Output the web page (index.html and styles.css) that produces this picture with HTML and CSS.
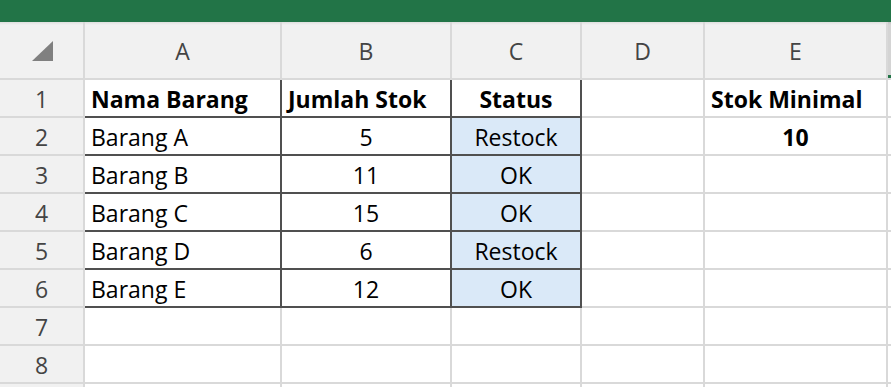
FILE: index.html
```
<!DOCTYPE html>
<html>
  <head>
    <meta charset="utf-8">
    <title> Stok Barang </title>
    <link rel="stylesheet" href="styles.css">
  </head>
  <body>
    <div class="ribbon"></div>

    <div class="sheet">
      <!-- column headers -->
      <div class="corner">
        <svg width="21" height="20" viewBox="0 0 21 20"><polygon points="0,20 21,20 21,0" fill="#808080"/></svg>
      </div>
      <div class="colhead">A</div>
      <div class="colhead">B</div>
      <div class="colhead">C</div>
      <div class="colhead">D</div>
      <div class="colhead">E</div>
      <div class="colhead active"></div>

      <!-- row 1 -->
      <div class="rowhead">1</div>
      <div class="cell box bold">Nama Barang</div>
      <div class="cell box bold">Jumlah Stok</div>
      <div class="cell box bold mid">Status</div>
      <div class="cell"></div>
      <div class="cell bold">Stok Minimal</div>
      <div class="cell"></div>

      <!-- row 2 -->
      <div class="rowhead">2</div>
      <div class="cell box">Barang A</div>
      <div class="cell box mid">5</div>
      <div class="cell box mid fill">Restock</div>
      <div class="cell"></div>
      <div class="cell bold mid">10</div>
      <div class="cell"></div>

      <!-- row 3 -->
      <div class="rowhead">3</div>
      <div class="cell box">Barang B</div>
      <div class="cell box mid">11</div>
      <div class="cell box mid fill">OK</div>
      <div class="cell"></div>
      <div class="cell"></div>
      <div class="cell"></div>

      <!-- row 4 -->
      <div class="rowhead">4</div>
      <div class="cell box">Barang C</div>
      <div class="cell box mid">15</div>
      <div class="cell box mid fill">OK</div>
      <div class="cell"></div>
      <div class="cell"></div>
      <div class="cell"></div>

      <!-- row 5 -->
      <div class="rowhead">5</div>
      <div class="cell box">Barang D</div>
      <div class="cell box mid">6</div>
      <div class="cell box mid fill">Restock</div>
      <div class="cell"></div>
      <div class="cell"></div>
      <div class="cell"></div>

      <!-- row 6 -->
      <div class="rowhead">6</div>
      <div class="cell box">Barang E</div>
      <div class="cell box mid">12</div>
      <div class="cell box mid fill">OK</div>
      <div class="cell"></div>
      <div class="cell"></div>
      <div class="cell"></div>

      <!-- rows 7 - 8 empty, then the top edge of the next row -->
      <div class="rowhead">7</div>
      <div class="cell"></div><div class="cell"></div><div class="cell"></div>
      <div class="cell"></div><div class="cell"></div><div class="cell"></div>

      <div class="rowhead">8</div>
      <div class="cell"></div><div class="cell"></div><div class="cell"></div>
      <div class="cell"></div><div class="cell"></div><div class="cell"></div>

      <div class="rowhead"></div>
      <div class="cell"></div><div class="cell"></div><div class="cell"></div>
      <div class="cell"></div><div class="cell"></div><div class="cell"></div>
    </div>
  </body>
</html>
```

FILE: styles.css
```
body, html {
    margin: 0;
    padding: 0;
    overflow: hidden;
    background: #fff;
}
.ribbon {
    height: 22px;
    background-color: #227447;
}
.sheet {
    display: grid;
    grid-template-columns: 85px 197px 170px 130px 123px 183px 1fr;
    grid-template-rows: 58px;
    grid-auto-rows: 38px;
    font-family: "Open Sans", "Liberation Sans", sans-serif;
    font-size: 23px;
}
.sheet > div {
    box-sizing: border-box;
    border-right: 2px solid #d9d9d9;
    border-bottom: 2px solid #d9d9d9;
    white-space: nowrap;
    overflow: hidden;
}
.corner, .colhead, .rowhead {
    background-color: #f1f1f1;
    color: #444;
}
.corner, .colhead {
    background-image: linear-gradient(rgba(0, 0, 0, 0.08), rgba(0, 0, 0, 0) 3px);
}
.corner {
    display: flex;
    justify-content: flex-end;
    align-items: flex-end;
    padding: 0 30px 17px 0;
}
.colhead {
    text-align: center;
    line-height: 56px;
    padding-top: 1px;
}
.colhead.active {
    background-color: #d4d4d4;
    box-shadow: inset 0 -3px 0 #227447;
}
.rowhead {
    text-align: center;
    line-height: 34px;
    padding-top: 2px;
}
.cell {
    color: #000;
    line-height: 34px;
    padding: 2px 6px 0 6px;
}
.sheet > .box {
    border-right-color: #505050;
    border-bottom-color: #505050;
}
.bold {
    font-weight: bold;
}
.mid {
    text-align: center;
}
.fill {
    background-color: #dae9f8;
}
```
